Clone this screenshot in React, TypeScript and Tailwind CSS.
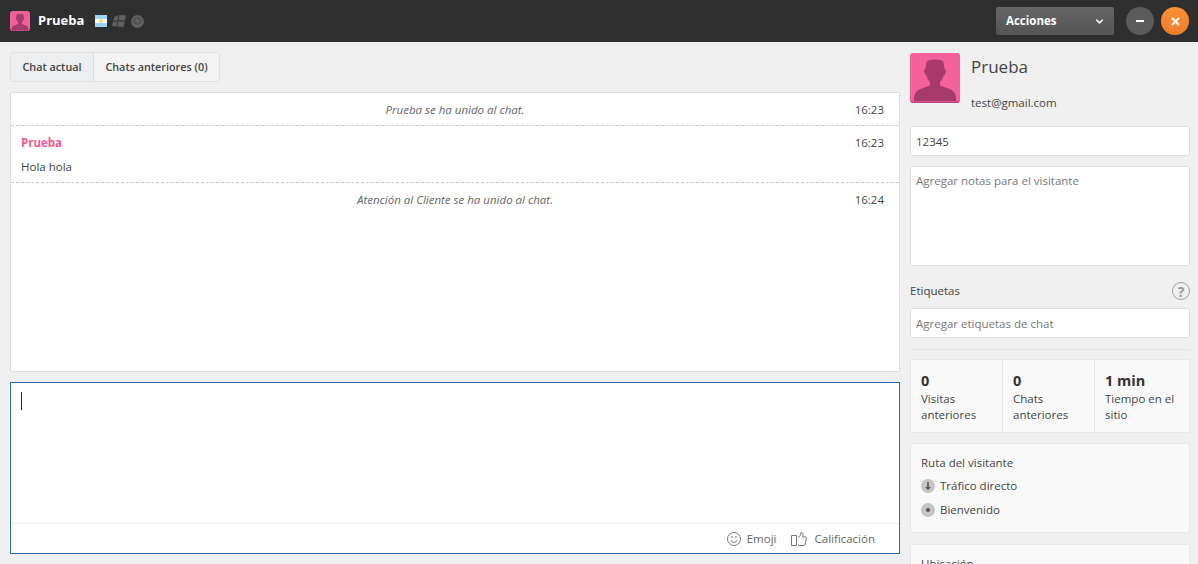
import { ChevronDown } from "lucide-react";

function Avatar({ size }: { size: number }) {
  return (
    <svg width={size} height={size} viewBox="0 0 50 50" className="block rounded-[3px]">
      <rect width="50" height="50" fill="#f4609a" />
      <path
        d="M16.500 9C19 5.800 31 5.800 33.500 9L34.500 15.500c1 .5 1.300 1.500 1.300 2.800 0 2.400-1.300 4-2.600 4.500-.5 2.800-1.500 4.800-3.200 6.200v3.500l9.500 3.500c3.500 1.300 6 4 6.500 8.500v3.500H4v-3.500c.5-4.500 3-7.200 6.500-8.500l9.500-3.500V29c-1.700-1.400-2.700-3.400-3.200-6.200-1.300-.5-2.600-2.100-2.600-4.500 0-1.300.3-2.300 1.300-2.800z"
        fill="#a63a6b"
      />
      <rect y="48.500" width="50" height="1.500" fill="#b8447a" />
    </svg>
  );
}

function Stat({ value, lines, last }: { value: string; lines: string[]; last?: boolean }) {
  return (
    <div className={`pl-[10px] pt-[10px] ${last ? "flex-1" : "w-[92px] border-r border-[#e6e6e6]"}`}>
      <div className="text-[14.5px] leading-[21px] font-bold text-[#333]">{value}</div>
      {lines.map((l) => (
        <div key={l} className="leading-[16px]">{l}</div>
      ))}
    </div>
  );
}

export default function App() {
  return (
    <div
      className="h-[564px] w-[1198px] overflow-hidden bg-[#f0f0f0] text-[11.5px] text-[#444]"
      style={{ fontFamily: '"Open Sans", sans-serif' }}
    >
      <div className="flex h-[42px] items-center bg-[#2f2f2f] pl-[10px] pr-[9px]">
        <Avatar size={20} />
        <span className="ml-2 text-[13px] font-bold text-white">Prueba</span>
        <div className="ml-[11px] flex items-center gap-[5px]">
          <svg width="12" height="12" viewBox="0 0 12 12" className="block">
            <rect width="12" height="4" fill="#9fd4f2" />
            <rect y="4" width="12" height="4" fill="#fff" />
            <rect y="8" width="12" height="4" fill="#9fd4f2" />
            <circle cx="6" cy="6" r="1.800" fill="#f5d94e" />
          </svg>
          <svg width="14" height="12" viewBox="0 0 14 12" className="block" fill="#5f5f5f">
            <path d="M2.500 1.500 6.500.3l-.9 5-4.500.6zM7.300 0 14 .3l-1 5.300-6.500-.3zM.9 6.700l4.600-.5-.9 5.300L0 11zM6.300 6.200l6.500.3-1 5.500-6.400-.5z" />
          </svg>
          <svg width="13" height="13" viewBox="0 0 13 13" className="block">
            <circle cx="6.500" cy="6.500" r="6.500" fill="#5f5f5f" />
            <circle cx="6.500" cy="6" r="3.200" fill="none" stroke="#444" strokeWidth="1" />
          </svg>
        </div>
        <div className="ml-auto flex h-7 w-[118px] items-center justify-between rounded-[2px] bg-gradient-to-b from-[#666] to-[#555] pl-[10px] pr-[9px] text-white">
          <span className="font-bold">Acciones</span>
          <ChevronDown size={11} strokeWidth={3.5} className="text-[#eee]" />
        </div>
        <div className="ml-[12px] flex h-7 w-7 items-center justify-center rounded-full bg-[#5c5c5c]">
          <span className="h-[2px] w-2 bg-white" />
        </div>
        <div className="ml-[7px] flex h-7 w-7 items-center justify-center rounded-full bg-gradient-to-b from-[#fb9236] to-[#ee7d2a]">
          <svg width="9" height="9" viewBox="0 0 9 9" stroke="#fff" strokeWidth="2">
            <path d="M1 1l7 7M8 1 1 8" />
          </svg>
        </div>
      </div>

      <div className="flex">
        <div className="ml-[10px] w-[890px]">
          <div className="mt-[10px] flex h-[30px] w-[210px] rounded-[3px] border border-[#e0e0e0] text-[10.8px] font-semibold text-[#444]">
            <div className="flex w-[83px] items-center justify-center border-r border-[#e0e0e0] bg-[#eceef0] pt-px">Chat actual</div>
            <div className="flex flex-1 items-center justify-center bg-[#f3f3f3] pt-px">Chats anteriores (0)</div>
          </div>

          <div className="mt-[10px] h-[280px] border border-[#dedede] bg-white">
            <div className="relative flex h-[33px] items-center justify-center border-b border-dashed border-[#ccc] px-[10px] pt-px">
              <span className="italic text-[#666]">Prueba se ha unido al chat.</span>
              <span className="absolute right-[15px]">16:23</span>
            </div>
            <div className="h-[57px] border-b border-dashed border-[#ccc] pl-[10px] pr-[15px]">
              <div className="flex h-[33px] items-center justify-between">
                <span className="font-bold text-[#f1588f]">Prueba</span>
                <span>16:23</span>
              </div>
              <div className="leading-[16px]">Hola hola</div>
            </div>
            <div className="relative flex h-[33px] items-center justify-center px-[10px]">
              <span className="italic text-[#666]">Atención al Cliente se ha unido al chat.</span>
              <span className="absolute right-[15px]">16:24</span>
            </div>
          </div>

          <div className="mt-[10px] flex h-[172px] flex-col border border-[#2b6cab] bg-white">
            <div className="flex-1 pl-[10px] pt-[9px]">
              <div className="h-[18px] w-px bg-[#222]" />
            </div>
            <div className="flex h-[30px] items-center justify-end border-t border-[#eaeaea] pr-[24px] pt-px text-[#666]">
              <svg width="14" height="14" viewBox="0 0 14 14" fill="none" stroke="#777" strokeWidth="1" className="block">
                <circle cx="7" cy="7" r="6.500" />
                <path d="M3.800 8c.7 1.600 1.800 2.400 3.200 2.400s2.500-.8 3.200-2.400M5 4v2.200M9 4v2.200" />
              </svg>
              <span className="ml-[6px]">Emoji</span>
              <svg width="16" height="14" viewBox="0 0 16 14" fill="none" stroke="#777" strokeWidth="1" className="ml-[14px] block">
                <path d="M.5 3.500h5v10h-5zM7 5.500c1.800-1 3-2.700 3-5 1.500-.2 2.300 1 2 3l-.3 1.500h3c.5 0 .8.500.7 1l-1.200 6.500c-.1.700-.5 1-1.200 1H9c-.8 0-1.300-.3-2-.7" />
              </svg>
              <span className="ml-[8px]">Calificación</span>
            </div>
          </div>
        </div>

        <div className="ml-[10px] w-[280px]">
          <div className="mt-[11px] flex">
            <Avatar size={50} />
            <div className="ml-[11px]">
              <div className="mt-[1px] text-[17px] leading-[26px]">Prueba</div>
              <div className="mt-[15px] leading-[16px]">test@gmail.com</div>
            </div>
          </div>
          <div className="mt-[15px] flex h-[30px] items-center rounded-[2px] border border-[#e0e0e0] bg-white pl-[5px] pt-px">12345</div>
          <div className="mt-[10px] h-[100px] rounded-[2px] border border-[#e0e0e0] bg-white pl-[5px] pt-[5px] text-[#777]">Agregar notas para el visitante</div>
          <div className="mt-[15px] flex h-[20px] items-center justify-between">
            <span>Etiquetas</span>
            <span className="flex h-[18px] w-[18px] items-center justify-center rounded-full border border-[#9aa0a8] text-[14px] font-bold text-[#999]">?</span>
          </div>
          <div className="mt-[7px] flex h-[30px] items-center rounded-[2px] border border-[#e0e0e0] bg-white pl-[5px] pt-px text-[#777]">Agregar etiquetas de chat</div>
          <div className="mt-[11px] border-t border-[#e4e4e4]" />
          <div className="mt-[9px] flex h-[74px] rounded-[2px] border border-[#e8e8e8] bg-[#f9f9f9]">
            <Stat value="0" lines={["Visitas", "anteriores"]} />
            <Stat value="0" lines={["Chats", "anteriores"]} />
            <Stat value="1 min" lines={["Tiempo en el", "sitio"]} last />
          </div>
          <div className="mt-[10px] h-[90px] rounded-[2px] border border-[#e8e8e8] bg-[#f9f9f9] pl-[10px] pt-[11px]">
            <div className="leading-[16px]">Ruta del visitante</div>
            <div className="mt-[7px] flex h-[16px] items-center gap-[5px]">
              <span className="flex h-[14px] w-[14px] items-center justify-center rounded-full bg-[#c4c4c4]">
                <svg width="8" height="10" viewBox="0 0 8 10" fill="#555">
                  <path d="M3.200 1h1.600v5H7L4 9 1 6h2.200z" />
                </svg>
              </span>
              Tráfico directo
            </div>
            <div className="mt-[8px] flex h-[16px] items-center gap-[5px]">
              <span className="flex h-[14px] w-[14px] items-center justify-center rounded-full bg-[#c4c4c4]">
                <span className="h-1 w-1 rounded-full bg-[#555]" />
              </span>
              Bienvenido
            </div>
          </div>
          <div className="mt-[11px] h-[60px] rounded-[2px] border border-[#e8e8e8] bg-[#f9f9f9] pl-[10px] pt-[11px]">
            <div className="leading-[16px]">Ubicación</div>
          </div>
        </div>
      </div>
    </div>
  );
}
